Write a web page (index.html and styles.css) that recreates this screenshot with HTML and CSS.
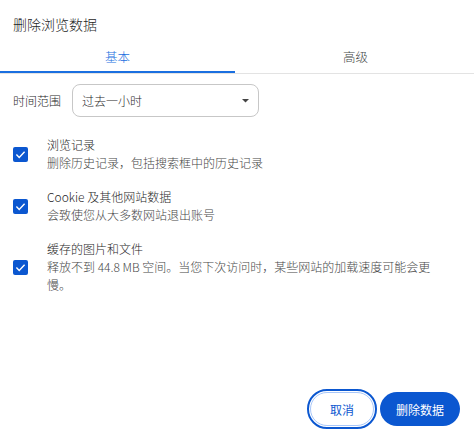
FILE: index.html
```html
<!DOCTYPE html>
<html lang="zh-CN">
<head>
<meta charset="utf-8">
<title>删除浏览数据</title>
<link rel="stylesheet" href="styles.css">
</head>
<body>
<div class="dialog">
  <div class="title">删除浏览数据</div>
  <div class="tabs">
    <div class="tab active">基本</div>
    <div class="tab">高级</div>
  </div>
  <div class="range">
    <span class="range-label">时间范围</span>
    <div class="select">
      <span>过去一小时</span>
      <svg class="arrow" width="7" height="4" viewBox="0 0 7 4"><path d="M0 0h7L3.5 3.5z" fill="#444"/></svg>
    </div>
  </div>
  <div class="items">
    <div class="item">
      <span class="check"><svg width="11" height="9" viewBox="0 0 11 9"><path d="M1.4 4.6l2.8 2.8L9.6 1.8" fill="none" stroke="#fff" stroke-width="1.4"/></svg></span>
      <div class="text">
        <div class="item-title">浏览记录</div>
        <div class="item-desc">删除历史记录，包括搜索框中的历史记录</div>
      </div>
    </div>
    <div class="item">
      <span class="check"><svg width="11" height="9" viewBox="0 0 11 9"><path d="M1.4 4.6l2.8 2.8L9.6 1.8" fill="none" stroke="#fff" stroke-width="1.4"/></svg></span>
      <div class="text">
        <div class="item-title">Cookie 及其他网站数据</div>
        <div class="item-desc">会致使您从大多数网站退出账号</div>
      </div>
    </div>
    <div class="item">
      <span class="check"><svg width="11" height="9" viewBox="0 0 11 9"><path d="M1.4 4.6l2.8 2.8L9.6 1.8" fill="none" stroke="#fff" stroke-width="1.4"/></svg></span>
      <div class="text">
        <div class="item-title">缓存的图片和文件</div>
        <div class="item-desc">释放不到 44.8 MB 空间。当您下次访问时，某些网站的加载速度可能会更慢。</div>
      </div>
    </div>
  </div>
  <div class="actions">
    <button class="btn cancel">取消</button>
    <button class="btn primary">删除数据</button>
  </div>
</div>
</body>
</html>
```

FILE: styles.css
```css
html, body {
  margin: 0;
  padding: 0;
  background: #fff;
}
body {
  font-family: "Noto Sans CJK SC", "Noto Sans", sans-serif;
  font-weight: 300;
  color: #1f1f1f;
}
.dialog {
  width: 474px;
  height: 436px;
  display: flex;
  flex-direction: column;
  box-sizing: border-box;
}
.title {
  font-size: 14px;
  line-height: 20px;
  padding: 14px 13px 0;
  color: #1f1f1f;
}
.tabs {
  display: grid;
  grid-template-columns: 237px 237px;
  margin-top: 5px;
  border-bottom: 1px solid #e3e3e3;
}
.tab {
  height: 34px;
  display: flex;
  align-items: center;
  justify-content: center;
  font-size: 12.5px;
  color: #444746;
}
.tab.active {
  color: #1a6fe0;
  box-shadow: inset 0 -2px 0 #1a6fe0;
  margin-right: 2px;
}
.range {
  display: flex;
  align-items: center;
  gap: 11px;
  padding: 10px 13px 0;
  font-size: 12px;
}
.range-label {
  color: #1f1f1f;
}
.select {
  width: 187px;
  height: 33px;
  box-sizing: border-box;
  border: 1px solid #c7c7c7;
  border-radius: 8px;
  display: flex;
  align-items: center;
  justify-content: space-between;
  padding: 0 9px 0 9px;
  color: #1f1f1f;
}
.arrow {
  display: block;
}
.items {
  display: flex;
  flex-direction: column;
  gap: 16px;
  padding: 19px 20px 0 13px;
}
.item {
  display: flex;
  align-items: center;
  gap: 19px;
}
.check {
  flex: none;
  width: 15px;
  height: 15px;
  border-radius: 2px;
  background: #0b57d0;
  display: flex;
  align-items: center;
  justify-content: center;
}
.check svg {
  display: block;
}
.text {
  font-size: 12px;
  line-height: 18px;
  width: 396px;
}
.item-title {
  color: #1f1f1f;
}
.item-desc {
  color: #474747;
}
.actions {
  margin-top: auto;
  display: flex;
  justify-content: flex-end;
  align-items: center;
  gap: 6px;
  padding: 0 14px 10px 0;
}
.btn {
  font-family: "Noto Sans CJK SC", "Noto Sans", sans-serif;
  font-size: 12px;
  font-weight: 400;
  height: 34px;
  border-radius: 17px;
  box-sizing: border-box;
  padding: 0;
  cursor: pointer;
}
.cancel {
  width: 64px;
  background: #fff;
  color: #0b57d0;
  border: 1px solid #a8c7fa;
  outline: 2px solid #0b57d0;
  outline-offset: 1px;
}
.primary {
  width: 80px;
  background: #0b57d0;
  color: #fff;
  border: none;
}
```
